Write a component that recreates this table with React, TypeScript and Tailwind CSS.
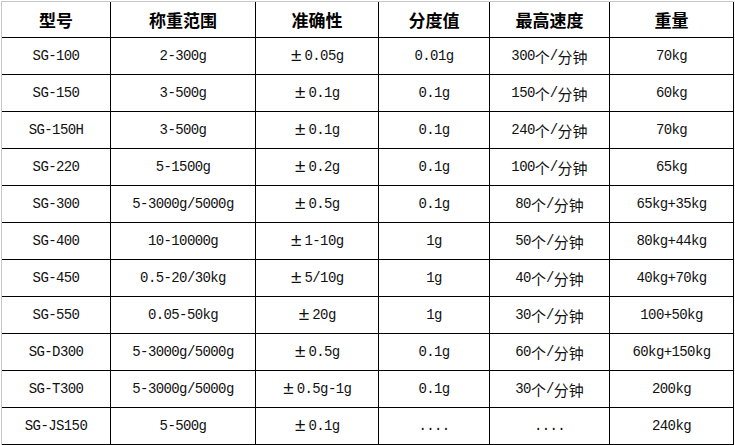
import React from "react";

const headers = ["型号", "称重范围", "准确性", "分度值", "最高速度", "重量"];

const rows: string[][] = [
  ["SG-100", "2-300g", "±0.05g", "0.01g", "300个/分钟", "70kg"],
  ["SG-150", "3-500g", "±0.1g", "0.1g", "150个/分钟", "60kg"],
  ["SG-150H", "3-500g", "±0.1g", "0.1g", "240个/分钟", "70kg"],
  ["SG-220", "5-1500g", "±0.2g", "0.1g", "100个/分钟", "65kg"],
  ["SG-300", "5-3000g/5000g", "±0.5g", "0.1g", "80个/分钟", "65kg+35kg"],
  ["SG-400", "10-10000g", "±1-10g", "1g", "50个/分钟", "80kg+44kg"],
  ["SG-450", "0.5-20/30kg", "±5/10g", "1g", "40个/分钟", "40kg+70kg"],
  ["SG-550", "0.05-50kg", "±20g", "1g", "30个/分钟", "100+50kg"],
  ["SG-D300", "5-3000g/5000g", "±0.5g", "0.1g", "60个/分钟", "60kg+150kg"],
  ["SG-T300", "5-3000g/5000g", "±0.5g-1g", "0.1g", "30个/分钟", "200kg"],
  ["SG-JS150", "5-500g", "±0.1g", "....", "....", "240kg"],
];

function Txt({ s }: { s: string }) {
  const parts: React.ReactNode[] = [];
  let buf = "";
  const flush = (k: number) => {
    if (buf) {
      parts.push(<span key={"a" + k}>{buf}</span>);
      buf = "";
    }
  };
  Array.from(s).forEach((ch, i) => {
    if (ch === "±") {
      flush(i);
      parts.push(
        <span key={"p" + i} className="inline-block w-[14px] text-left text-[19px] leading-none tracking-normal">
          ±
        </span>
      );
    } else if (/[\u4e00-\u9fff]/.test(ch)) {
      flush(i);
      parts.push(
        <span key={"c" + i} className="font-['Noto_Sans_CJK_SC',sans-serif] text-[15px] tracking-normal">
          {ch}
        </span>
      );
    } else {
      buf += ch;
    }
  });
  flush(s.length);
  return <>{parts}</>;
}

export default function App() {
  return (
    <div className="w-[735px] h-[445px] bg-white pt-[1px] pl-[1px] overflow-hidden">
      <div className="w-fit border-l border-t border-[#c8c8c8]">
        <div className="grid grid-cols-[109px_145px_123px_111px_120px_124px]">
          {headers.map((h) => (
            <div
              key={h}
              className="h-[36px] border-r border-b border-black flex items-center justify-center font-['Noto_Sans_CJK_SC',sans-serif] font-bold text-[17px] text-black leading-none"
            >
              {h}
            </div>
          ))}
          {rows.map((r, ri) =>
            r.map((c, ci) => (
              <div
                key={ri + "-" + ci}
                className="h-[37px] border-r border-b border-black flex items-center justify-center font-['Liberation_Mono','Noto_Sans_CJK_SC',monospace] text-[14px] tracking-[-0.6px] text-[#111] leading-none whitespace-nowrap"
              >
                <Txt s={c} />
              </div>
            ))
          )}
        </div>
      </div>
    </div>
  );
}
